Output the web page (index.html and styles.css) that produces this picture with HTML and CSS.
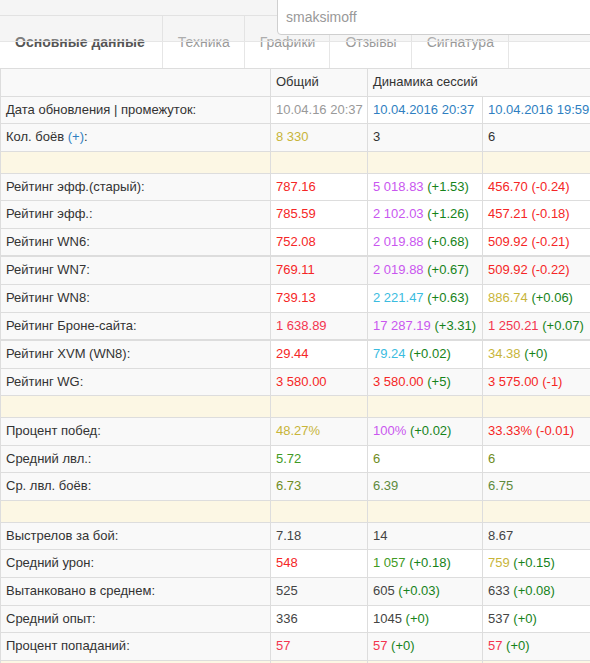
FILE: index.html
```html
<!DOCTYPE html>
<html lang="ru">
<head>
<meta charset="utf-8">
<title>Статистика</title>
<link rel="stylesheet" href="styles.css">
</head>
<body>
<div class="page">
  <nav class="tabs">
    <div class="tab active">Основные данные</div>
    <div class="tab">Техника</div>
    <div class="tab">Графики</div>
    <div class="tab">Отзывы</div>
    <div class="tab">Сигнатура</div>
  </nav>

  <table class="stats">
    <colgroup>
      <col class="c1"><col class="c2"><col class="c3"><col class="c4">
    </colgroup>
    <thead>
      <tr class="head">
        <td class="l"></td>
        <td>Общий</td>
        <td colspan="2">Динамика сессий</td>
      </tr>
    </thead>
    <tbody>
      <tr>
        <td class="l">Дата обновления | промежуток:</td>
        <td class="gr">10.04.16 20:37</td>
        <td class="b">10.04.2016 20:37</td>
        <td class="b">10.04.2016 19:59</td>
      </tr>
      <tr class="s">
        <td class="l">Кол. боёв <span class="b">(+)</span>:</td>
        <td class="o">8 330</td>
        <td>3</td>
        <td>6</td>
      </tr>
      <tr class="y"><td class="l"></td><td></td><td></td><td></td></tr>
      <tr>
        <td class="l">Рейтинг эфф.(старый):</td>
        <td class="r">787.16</td>
        <td><span class="p">5 018.83</span> <span class="g">(+1.53)</span></td>
        <td><span class="r">456.70</span> <span class="r">(-0.24)</span></td>
      </tr>
      <tr>
        <td class="l">Рейтинг эфф.:</td>
        <td class="r">785.59</td>
        <td><span class="p">2 102.03</span> <span class="g">(+1.26)</span></td>
        <td><span class="r">457.21</span> <span class="r">(-0.18)</span></td>
      </tr>
      <tr>
        <td class="l">Рейтинг WN6:</td>
        <td class="r">752.08</td>
        <td><span class="p">2 019.88</span> <span class="g">(+0.68)</span></td>
        <td><span class="r">509.92</span> <span class="r">(-0.21)</span></td>
      </tr>
    </tbody>
    <tbody>
      <tr class="s">
        <td class="l">Рейтинг WN7:</td>
        <td class="r">769.11</td>
        <td><span class="p">2 019.88</span> <span class="g">(+0.67)</span></td>
        <td><span class="r">509.92</span> <span class="r">(-0.22)</span></td>
      </tr>
      <tr>
        <td class="l">Рейтинг WN8:</td>
        <td class="r">739.13</td>
        <td><span class="c">2 221.47</span> <span class="g">(+0.63)</span></td>
        <td><span class="o">886.74</span> <span class="g">(+0.06)</span></td>
      </tr>
      <tr class="s">
        <td class="l">Рейтинг Броне-сайта:</td>
        <td class="pk">1 638.89</td>
        <td><span class="p">17 287.19</span> <span class="g">(+3.31)</span></td>
        <td><span class="pk">1 250.21</span> <span class="g">(+0.07)</span></td>
      </tr>
    </tbody>
    <tbody>
      <tr>
        <td class="l">Рейтинг XVM (WN8):</td>
        <td class="r">29.44</td>
        <td><span class="c">79.24</span> <span class="g">(+0.02)</span></td>
        <td><span class="o">34.38</span> <span class="g">(+0)</span></td>
      </tr>
      <tr class="s">
        <td class="l">Рейтинг WG:</td>
        <td class="r">3 580.00</td>
        <td><span class="r">3 580.00</span> <span class="g">(+5)</span></td>
        <td><span class="r">3 575.00</span> <span class="r">(-1)</span></td>
      </tr>
      <tr class="y"><td class="l"></td><td></td><td></td><td></td></tr>
      <tr class="s">
        <td class="l">Процент побед:</td>
        <td class="o">48.27%</td>
        <td><span class="p">100%</span> <span class="g">(+0.02)</span></td>
        <td><span class="r">33.33%</span> <span class="r">(-0.01)</span></td>
      </tr>
      <tr>
        <td class="l">Средний лвл.:</td>
        <td class="lg">5.72</td>
        <td class="ol">6</td>
        <td class="ol">6</td>
      </tr>
      <tr class="s">
        <td class="l">Ср. лвл. боёв:</td>
        <td class="ol">6.73</td>
        <td class="gg">6.39</td>
        <td class="gg">6.75</td>
      </tr>
      <tr class="y"><td class="l"></td><td></td><td></td><td></td></tr>
      <tr class="s">
        <td class="l">Выстрелов за бой:</td>
        <td class="d">7.18</td>
        <td class="d">14</td>
        <td class="d">8.67</td>
      </tr>
      <tr>
        <td class="l">Средний урон:</td>
        <td class="r">548</td>
        <td><span class="lg">1 057</span> <span class="g">(+0.18)</span></td>
        <td><span class="o">759</span> <span class="g">(+0.15)</span></td>
      </tr>
      <tr class="s">
        <td class="l">Вытанковано в среднем:</td>
        <td class="d">525</td>
        <td><span class="d">605</span> <span class="g">(+0.03)</span></td>
        <td><span class="d">633</span> <span class="g">(+0.08)</span></td>
      </tr>
      <tr>
        <td class="l">Средний опыт:</td>
        <td class="d">336</td>
        <td><span class="d">1045</span> <span class="g">(+0)</span></td>
        <td><span class="d">537</span> <span class="g">(+0)</span></td>
      </tr>
      <tr class="s">
        <td class="l">Процент попаданий:</td>
        <td class="pk">57</td>
        <td><span class="pk">57</span> <span class="g">(+0)</span></td>
        <td><span class="pk">57</span> <span class="g">(+0)</span></td>
      </tr>
      <tr class="y"><td class="l"></td><td></td><td></td><td></td></tr>
    </tbody>
  </table>

  <div class="topbar">
    <div class="search">smaksimoff</div>
  </div>
</div>
</body>
</html>
```

FILE: styles.css
```css
html, body {
  margin: 0;
  padding: 0;
  overflow: hidden;
  background: #fff;
}

body {
  font-family: "Liberation Sans", Arial, sans-serif;
  color: #333;
}

.page {
  position: relative;
  padding-top: 15px;
}

/* tabs */
.tabs {
  display: flex;
  border-top: 1px solid #e4e4e4;
  height: 52px;
}

.tab {
  padding: 0 14px 0 15px;
  border-right: 1px solid #e6e6e6;
  font-size: 14px;
  line-height: 52px;
  color: #999;
  white-space: nowrap;
}

.tab.active {
  font-weight: bold;
  color: #555;
  padding-right: 17px;
}

/* translucent top bar over the tabs */
.topbar {
  position: absolute;
  top: 0;
  left: 0;
  right: 0;
  height: 41px;
  background: rgba(222, 222, 222, 0.3);
  border-bottom: 1px solid #e6e6e6;
}

.search {
  margin: -6px -30px 0 277px;
  border: 1px solid #cfcfcf;
  border-radius: 4px;
  background: #fff;
  padding: 12px 8px 7px 8px;
  font-size: 14px;
  line-height: 20px;
  color: #999;
}

/* table */
.stats {
  border-collapse: collapse;
  table-layout: fixed;
  width: 604px;
  font-size: 13px;
  line-height: 18.57px;
}

.c1 { width: 270px; }
.c2 { width: 97px; }
.c3 { width: 115px; }
.c4 { width: 122px; }

.stats td {
  border: 1px solid #ddd;
  padding: 4px 5px;
  white-space: nowrap;
  overflow: hidden;
  background: #fff;
}

.stats tbody + tbody tr:first-child td {
  border-top: 2px solid #ddd;
}

.stats .head td { background: #f9f9f9; }
.stats tr.s td { background: #f9f9f9; }
.stats td.l { background: #f9f9f9; color: #333; }

.stats tr.y td {
  background: #fcf7e4;
  padding: 0;
  height: 21px;
}

/* value colours */
.gr { color: #999; }
.b  { color: #2f7fc1; }
.o  { color: #c8b53a; }
.r  { color: #f52626; }
.pk { color: #f3354f; }
.p  { color: #c957ef; }
.c  { color: #3bbcdf; }
.g  { color: #16831a; }
.lg { color: #3f9a24; }
.ol { color: #6f8c22; }
.gg { color: #5e8a3c; }
.d  { color: #444; }
```
